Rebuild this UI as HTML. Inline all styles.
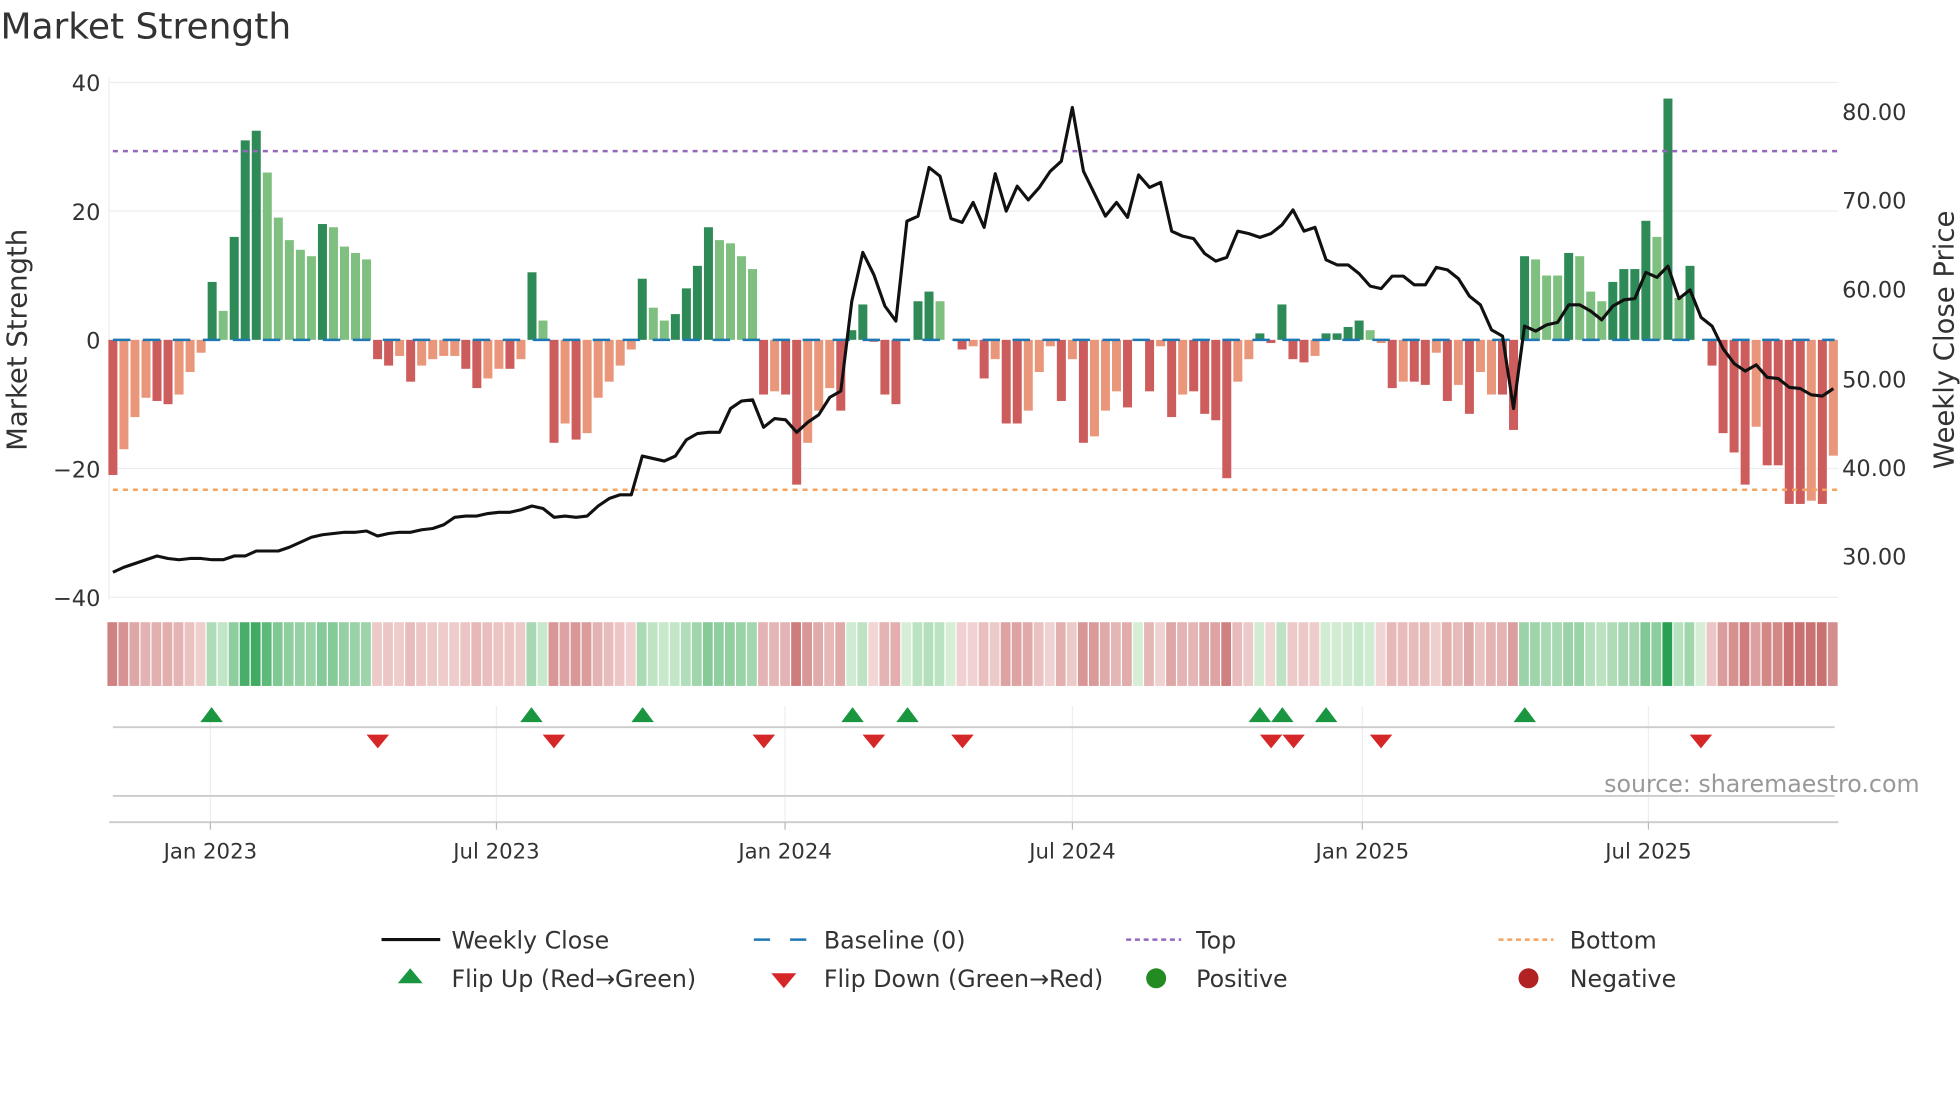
<!DOCTYPE html>
<html><head><meta charset="utf-8"><style>
html,body{margin:0;padding:0;background:#fff;}
svg{display:block;font-family:"DejaVu Sans","Liberation Sans",sans-serif;}
</style></head><body>
<svg id="s" width="1960" height="1102" viewBox="0 0 1568 882" xmlns="http://www.w3.org/2000/svg">
<rect width="1568" height="882" fill="#fff"/>
<text x="0" y="31" font-size="28.8" fill="#333">Market Strength</text>
<g stroke="#eceef2" stroke-width="1">
<line x1="87" y1="66" x2="1471" y2="66"/><line x1="87" y1="169" x2="1471" y2="169"/>
<line x1="87" y1="375" x2="1471" y2="375"/><line x1="87" y1="478" x2="1471" y2="478"/>
<line x1="87" y1="62" x2="87" y2="480"/>
</g>
<g font-size="18" fill="#333" text-anchor="end">
<text x="80" y="73">40</text><text x="80" y="176">20</text><text x="80" y="279">0</text>
<text x="80" y="382">−20</text><text x="80" y="485">−40</text>
</g>
<g font-size="18" fill="#333">
<text x="1474" y="96">80.00</text><text x="1474" y="167">70.00</text><text x="1474" y="238">60.00</text>
<text x="1474" y="310">50.00</text><text x="1474" y="381">40.00</text><text x="1474" y="452">30.00</text>
</g>
<text transform="translate(21,272) rotate(-90)" font-size="22" fill="#333" text-anchor="middle">Market Strength</text>
<text transform="translate(1563,272) rotate(-90)" font-size="22" fill="#333" text-anchor="middle">Weekly Close Price</text>
<g id="bars"></g>
<line x1="90" y1="272" x2="1468" y2="272" stroke="#1f77b4" stroke-width="2" stroke-dasharray="14,10"/>
<line x1="90" y1="121" x2="1470" y2="121" stroke="#9467bd" stroke-width="2" stroke-dasharray="4,4"/>
<line x1="90" y1="392" x2="1470" y2="392" stroke="#f4a460" stroke-width="2" stroke-dasharray="4,4"/>
<polyline id="price" fill="none" stroke="#111" stroke-width="2.5" stroke-linejoin="round"/>
<g id="strip"></g>
<g stroke="#eceef2" stroke-width="1">
<line x1="168" y1="565" x2="168" y2="658"/><line x1="397" y1="565" x2="397" y2="658"/>
<line x1="628" y1="565" x2="628" y2="658"/><line x1="858" y1="565" x2="858" y2="658"/>
<line x1="1090" y1="565" x2="1090" y2="658"/><line x1="1319" y1="565" x2="1319" y2="658"/>
</g>
<line x1="90" y1="582" x2="1468" y2="582" stroke="#ccc" stroke-width="1.5"/>
<line x1="90" y1="637" x2="1468" y2="637" stroke="#ccc" stroke-width="1.5"/>
<line x1="87" y1="658" x2="1471" y2="658" stroke="#ccc" stroke-width="1.5"/>
<g stroke="#bbb"><line x1="168" y1="658" x2="168" y2="664"/><line x1="397" y1="658" x2="397" y2="664"/><line x1="628" y1="658" x2="628" y2="664"/><line x1="858" y1="658" x2="858" y2="664"/><line x1="1090" y1="658" x2="1090" y2="664"/><line x1="1319" y1="658" x2="1319" y2="664"/></g>
<g id="tri"></g>
<text x="1536" y="634" font-size="19" fill="#999" text-anchor="end">source: sharemaestro.com</text>
<g font-size="17" fill="#333" text-anchor="middle">
<text x="168" y="687">Jan 2023</text><text x="397" y="687">Jul 2023</text><text x="628" y="687">Jan 2024</text>
<text x="858" y="687">Jul 2024</text><text x="1090" y="687">Jan 2025</text><text x="1319" y="687">Jul 2025</text>
</g>
<g font-size="19" fill="#333">
<line x1="305" y1="752" x2="352" y2="752" stroke="#111" stroke-width="2.5"/><text x="361" y="759">Weekly Close</text>
<line x1="603" y1="752" x2="647" y2="752" stroke="#1f77b4" stroke-width="2" stroke-dasharray="13,16"/><text x="659" y="759">Baseline (0)</text>
<line x1="901" y1="752" x2="945" y2="752" stroke="#9467bd" stroke-width="2" stroke-dasharray="4,3"/><text x="957" y="759">Top</text>
<line x1="1199" y1="752" x2="1243" y2="752" stroke="#f4a460" stroke-width="2" stroke-dasharray="4,3"/><text x="1256" y="759">Bottom</text>
<polygon points="328,775 338,787 318,787" fill="#1a9641"/><text x="361" y="790">Flip Up (Red→Green)</text>
<polygon points="617,779 637,779 627,791" fill="#d62728"/><text x="659" y="790">Flip Down (Green→Red)</text>
<circle cx="925" cy="783" r="8" fill="#228b22"/><text x="957" y="790">Positive</text>
<circle cx="1223" cy="783" r="8" fill="#b22222"/><text x="1256" y="790">Negative</text>
</g>
</svg>
<script>
var D=[[-21,1],[-17,0],[-12,0],[-9,0],[-9.5,1],[-10,1],[-8.5,0],[-5,0],[-2,0],[9,1],[4.5,0],[16,1],[31,1],[32.5,1],[26,0],[19,0],[15.5,0],[14,0],[13,0],[18,1],[17.5,0],[14.5,0],[13.5,0],[12.5,0],
[-3,1],[-4,1],[-2.5,0],[-6.5,1],[-4,0],[-3,0],[-2.5,0],[-2.5,0],[-4.5,1],[-7.5,1],[-6,0],[-4.5,0],[-4.5,1],[-3,0],[10.5,1],[3,0],[-16,1],[-13,0],[-15.5,1],[-14.5,0],[-9,0],[-6.5,0],[-4,0],[-1.5,0],
[9.5,1],[5,0],[3,0],[4,1],[8,1],[11.5,1],[17.5,1],[15.5,0],[15,0],[13,0],[11,0],[-8.5,1],[-8,0],[-8.5,1],[-22.5,1],[-16,0],[-11,0],[-7.5,0],[-11,1],[1.5,1],[5.5,1],[-0.3,1],[-8.5,1],[-10,1],[0,1],
[6,1],[7.5,1],[6,0],[0,0],[-1.5,1],[-1,0],[-6,1],[-3,0],[-13,1],[-13,1],[-11,0],[-5,0],[-1,0],[-9.5,1],[-3,0],[-16,1],[-15,0],[-11,0],[-8,0],[-10.5,1],[0,0],[-8,1],[-1,0],[-12,1],[-8.5,0],[-8,1],
[-11.5,1],[-12.5,1],[-21.5,1],[-6.5,0],[-3,0],[1,1],[-0.5,1],[5.5,1],[-3,1],[-3.5,1],[-2.5,0],[1,1],[1,1],[2,1],[3,1],[1.5,0],[-0.5,0],[-7.5,1],[-6.5,0],[-6.5,1],[-7,1],[-2,0],[-9.5,1],[-7,0],
[-11.5,1],[-5,0],[-8.5,0],[-8.5,1],[-14,1],[13,1],[12.5,0],[10,0],[10,0],[13.5,1],[13,0],[7.5,0],[6,0],[9,1],[11,1],[11,1],[18.5,1],[16,0],[37.5,1],[6.5,0],[11.5,1],[0,0],[-4,1],[-14.5,1],[-17.5,1],
[-22.5,1],[-13.5,0],[-19.5,1],[-19.5,1],[-25.5,1],[-25.5,1],[-25,0],[-25.5,1],[-18,0]];
var P=[458,454,451,448,445,447,448,447,447,448,448,445,445,441,441,441,438,434,430,428,427,426,426,425,429,427,426,426,424,423,420,414,413,413,411,410,410,408,405,407,414,413,414,413,405,399,396,396,365,367,369,365,352,347,346,346,327,321,320,342,335,336,346,338,332,318,313,241,202,220,245,257,177,173,134,141,175,178,162,182,139,169,149,160,150,137,129,86,137,155,173,162,174,140,150,146,185,189,191,203,209,206,185,187,190,187,180,168,185,182,208,212,212,219,229,231,221,221,228,228,214,216,223,237,244,264,269,327,261,265,260,258,244,244,249,256,245,240,239,218,222,213,239,232,254,261,279,291,297,292,302,303,310,311,316,317,311];
var NS="http://www.w3.org/2000/svg";
function el(n,a,p){var e=document.createElementNS(NS,n);for(var k in a)e.setAttribute(k,a[k]);p.appendChild(e);return e;}
var bars=document.getElementById('bars'),strip=document.getElementById('strip'),tri=document.getElementById('tri');
var step=(1467-90)/156;
function mix(a,b,t){t=Math.max(0,Math.min(1,t));var r=[];for(var i=0;i<3;i++)r.push(Math.round(a[i]+(b[i]-a[i])*t));return 'rgb('+r.join(',')+')';}
var pts=[];
for(var i=0;i<D.length;i++){
 var cx=90+i*step,v=D[i][0],dk=D[i][1];
 var h=Math.abs(v)*5.15,col=v>=0?(dk?'#2e8b57':'#7fbf7f'):(dk?'#cd5c5c':'#e9967a');
 if(h>0.5)el('rect',{x:cx-3.6,y:v>=0?272-h:272,width:7.2,height:h,fill:col},bars);
 var sc=v>=0?mix([214,238,214],[40,160,80],v/38):mix([242,214,214],[200,110,110],-v/26);
 el('rect',{x:cx-4.4,y:498,width:step-1,height:51,fill:sc},strip);
 pts.push(cx.toFixed(1)+','+P[i]);
}
document.getElementById('price').setAttribute('points',pts.join(' '));
[169,425,514,682,726,1008,1026,1061,1220].forEach(function(x){el('polygon',{points:(x)+',566 '+(x+9)+',578 '+(x-9)+',578',fill:'#1a9641'},tri);});
[302,443,611,699,770,1017,1035,1105,1361].forEach(function(x){el('polygon',{points:(x-9)+',588 '+(x+9)+',588 '+x+',599',fill:'#d62728'},tri);});
</script>
</body></html>
